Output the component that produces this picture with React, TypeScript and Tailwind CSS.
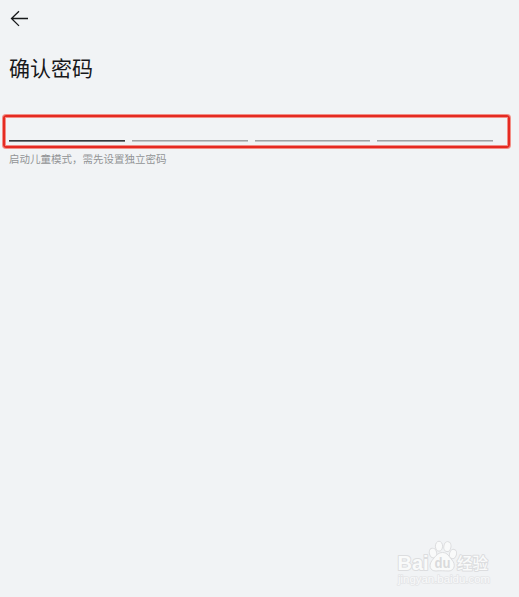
const cells = [0, 1, 2, 3];

function BackArrow() {
  return (
    <svg width="20" height="18" viewBox="0 0 20 18" fill="none" stroke="#17181a" strokeWidth="1.3">
      <path d="M19 8.500H2.500M10 1.200L2.500 8.500l7.500 7.400" />
    </svg>
  );
}

function Watermark() {
  return (
    <svg
      className="absolute bottom-2 right-5 font-['Liberation_Sans','Noto_Sans_CJK_SC',sans-serif]"
      width="110"
      height="52"
      viewBox="0 0 110 52"
      fill="#f9fafa"
      stroke="#dcdddf"
      strokeWidth="1"
      strokeLinejoin="round"
    >
      <g fontWeight="700" strokeWidth="2" paintOrder="stroke">
        <text x="8.500" y="33" fontSize="20.500" textLength="31" lengthAdjust="spacingAndGlyphs">
          Bai
        </text>
        <text x="68" y="32" fontSize="16" fontWeight="500" textLength="31" lengthAdjust="spacingAndGlyphs">
          经验
        </text>
        <text x="9" y="46" fontSize="11" fontWeight="400" strokeWidth="1.6" stroke="#e4e5e7" fill="#f8f9fa" textLength="92" lengthAdjust="spacingAndGlyphs">
          jingyan.baidu.com
        </text>
      </g>
      <ellipse cx="44" cy="16" rx="3.7" ry="4.9" transform="rotate(-15 44 16)" />
      <ellipse cx="50" cy="9.200" rx="3.6" ry="5" />
      <ellipse cx="58.4" cy="9.6" rx="3.6" ry="5" transform="rotate(10 58.4 9.6)" />
      <ellipse cx="64" cy="17" rx="3.5" ry="4.7" transform="rotate(15 64 17)" />
      <path d="M53.500 15.500c5 0 6.500 4 9.500 7.500c4 4.500 2.500 10.500-3 11c-4.500 0-8.500-.6-13 0c-6.500 0-7.500-6-4-10.500c3-3.500 5.500-8 10.500-8z" />
      <text x="45.500" y="31" fontSize="14" fontWeight="700" fill="#d9dadc" stroke="none" textLength="16" lengthAdjust="spacingAndGlyphs">
        du
      </text>
    </svg>
  );
}

export default function App() {
  return (
    <div className="relative flex h-screen flex-col overflow-hidden bg-[#f1f3f5] font-['Noto_Sans_CJK_SC',sans-serif]">
      <header className="pl-[9px] pt-[10px]">
        <BackArrow />
      </header>
      <h1 className="mt-[24px] pl-[9px] text-[21px] leading-[30px] text-[#17181a]">确认密码</h1>

      <div className="ml-[3px] mt-[33px] flex h-[33px] w-[507px] items-end rounded-[3px] border-2 border-[#e52a22] pb-[4px] pl-[4px] pr-[15px] shadow-[0_0_0_1px_#f28e87,inset_0_0_0_1px_#f28e87]">
        <div className="flex w-full gap-[7px]">
          {cells.map((i) => (
            <div
              key={i}
              className={
                i === 0
                  ? 'h-[2px] flex-1 border-b border-[#75777a] bg-[#36383b]'
                  : 'h-[2px] flex-1 border-b border-[#c4c6c8] bg-[#9fa1a3]'
              }
            />
          ))}
        </div>
      </div>
      <p className="mt-[3px] pl-[9px] text-[10.5px] leading-4 text-[#929496]">启动儿童模式，需先设置独立密码</p>

      <Watermark />
    </div>
  );
}
